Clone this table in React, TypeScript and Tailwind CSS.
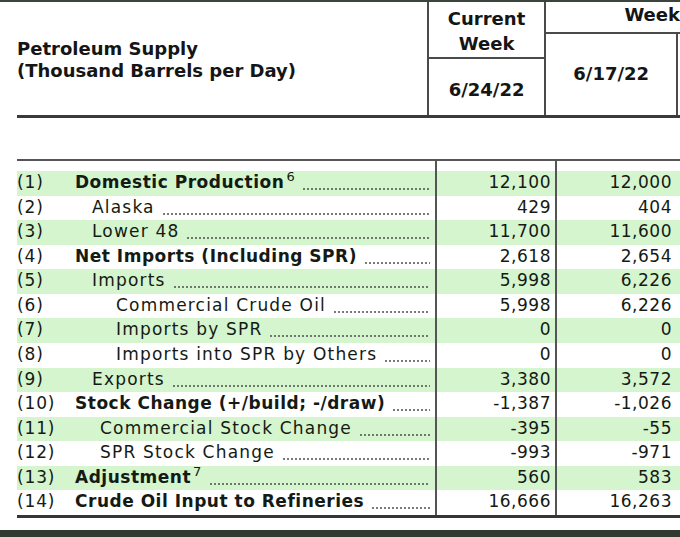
import React from "react";

type Row = {
  n: string;
  label: string;
  sup?: string;
  bold?: boolean;
  indent: string;
  a: string;
  b: string;
};

const rows: Row[] = [
  { n: "(1)", label: "Domestic Production", sup: "6", bold: true, indent: "ml-0", a: "12,100", b: "12,000" },
  { n: "(2)", label: "Alaska", indent: "ml-[17px]", a: "429", b: "404" },
  { n: "(3)", label: "Lower 48", indent: "ml-[17px]", a: "11,700", b: "11,600" },
  { n: "(4)", label: "Net Imports (Including SPR)", bold: true, indent: "ml-0", a: "2,618", b: "2,654" },
  { n: "(5)", label: "Imports", indent: "ml-[17px]", a: "5,998", b: "6,226" },
  { n: "(6)", label: "Commercial Crude Oil", indent: "ml-[41px]", a: "5,998", b: "6,226" },
  { n: "(7)", label: "Imports by SPR", indent: "ml-[41px]", a: "0", b: "0" },
  { n: "(8)", label: "Imports into SPR by Others", indent: "ml-[41px]", a: "0", b: "0" },
  { n: "(9)", label: "Exports", indent: "ml-[17px]", a: "3,380", b: "3,572" },
  { n: "(10)", label: "Stock Change (+/build; -/draw)", bold: true, indent: "ml-0", a: "-1,387", b: "-1,026" },
  { n: "(11)", label: "Commercial Stock Change", indent: "ml-[25px]", a: "-395", b: "-55" },
  { n: "(12)", label: "SPR Stock Change", indent: "ml-[25px]", a: "-993", b: "-971" },
  { n: "(13)", label: "Adjustment", sup: "7", bold: true, indent: "ml-0", a: "560", b: "583" },
  { n: "(14)", label: "Crude Oil Input to Refineries", bold: true, indent: "ml-0", a: "16,666", b: "16,263" },
];

export default function App() {
  return (
    <div
      className="w-[680px] h-[537px] bg-white flex flex-col overflow-hidden text-[#141a14]"
      style={{ fontFamily: '"DejaVu Sans", "Liberation Sans", sans-serif' }}
    >
      <div className="h-[2px] bg-[#3b453b] shrink-0" />

      {/* Header */}
      <div className="ml-[17px] flex h-[116px] border-b-[3px] border-[#3a3a3a] shrink-0">
        <div className="w-[418px] pt-[36px] font-bold text-[18px] leading-[22px] text-[#151515]">
          <div>Petroleum Supply</div>
          <div>(Thousand Barrels per Day)</div>
        </div>
        <div className="w-[120px] border-l-2 border-[#4a4a4a] flex flex-col font-bold text-[18px] text-[#151515]">
          <div className="h-[57px] border-b-2 border-[#4a4a4a] flex flex-col items-center justify-start leading-[25px] pt-[4px]">
            <div>Current</div>
            <div>Week</div>
          </div>
          <div className="flex-1 flex items-center justify-center pt-[4px]">6/24/22</div>
        </div>
        <div className="flex-1 border-l-2 border-[#4a4a4a] flex flex-col font-bold text-[18px] text-[#151515]">
          <div className="h-[32px] border-b-2 border-[#4a4a4a] pl-[78px] leading-[22px] pt-[2px] whitespace-nowrap overflow-hidden">
            Week
          </div>
          <div className="flex-1 mr-[2px] border-r-2 border-[#4a4a4a] flex items-center justify-center pb-[2px]">
            6/17/22
          </div>
        </div>
      </div>

      <div className="h-[41px] shrink-0" />

      {/* Body */}
      <div className="ml-[17px] border-t-[2.5px] border-[#555] border-b-[3px] border-b-[#353535] flex flex-col shrink-0">
        <div className="flex h-[10px]">
          <div className="w-[418px]" />
          <div className="w-[120px] border-l-2 border-[#555]" />
          <div className="flex-1 border-l-2 border-[#555]" />
        </div>
        {rows.map((r, i) => (
          <div
            key={r.n}
            className={`flex h-[24.57px] text-[17px] leading-[20px] ${i % 2 === 0 ? "bg-[#d5f5cf]" : "bg-white"}`}
          >
            <div className="w-[418px] flex items-start pt-[1px] pr-[5px]">
              <span className="w-[58px] shrink-0 tracking-[0.05em]">{r.n}</span>
              <span
                className={`${r.indent} whitespace-nowrap ${r.bold ? "font-bold tracking-[0.03em]" : "tracking-[0.07em]"}`}
              >
                {r.label}
                {r.sup ? (
                  <sup className="font-normal text-[13px] top-[-7px] ml-[2px]">{r.sup}</sup>
                ) : null}
              </span>
              <div className="flex-1 ml-[7px] mt-[16px] h-[2px] bg-[radial-gradient(circle,#4a4a4a_0.6px,transparent_1px)] bg-size-[4px_2px]" />
            </div>
            <div className="w-[120px] border-l-2 border-[#555] text-right pr-[4px] pt-[1px] tracking-[0.03em]">
              {r.a}
            </div>
            <div className="flex-1 border-l-2 border-[#555] text-right pr-[8px] pt-[1px] tracking-[0.03em]">
              {r.b}
            </div>
          </div>
        ))}
      </div>

      <div className="flex-1" />
      <div className="h-[7px] bg-[#2f392f] shrink-0" />
    </div>
  );
}
